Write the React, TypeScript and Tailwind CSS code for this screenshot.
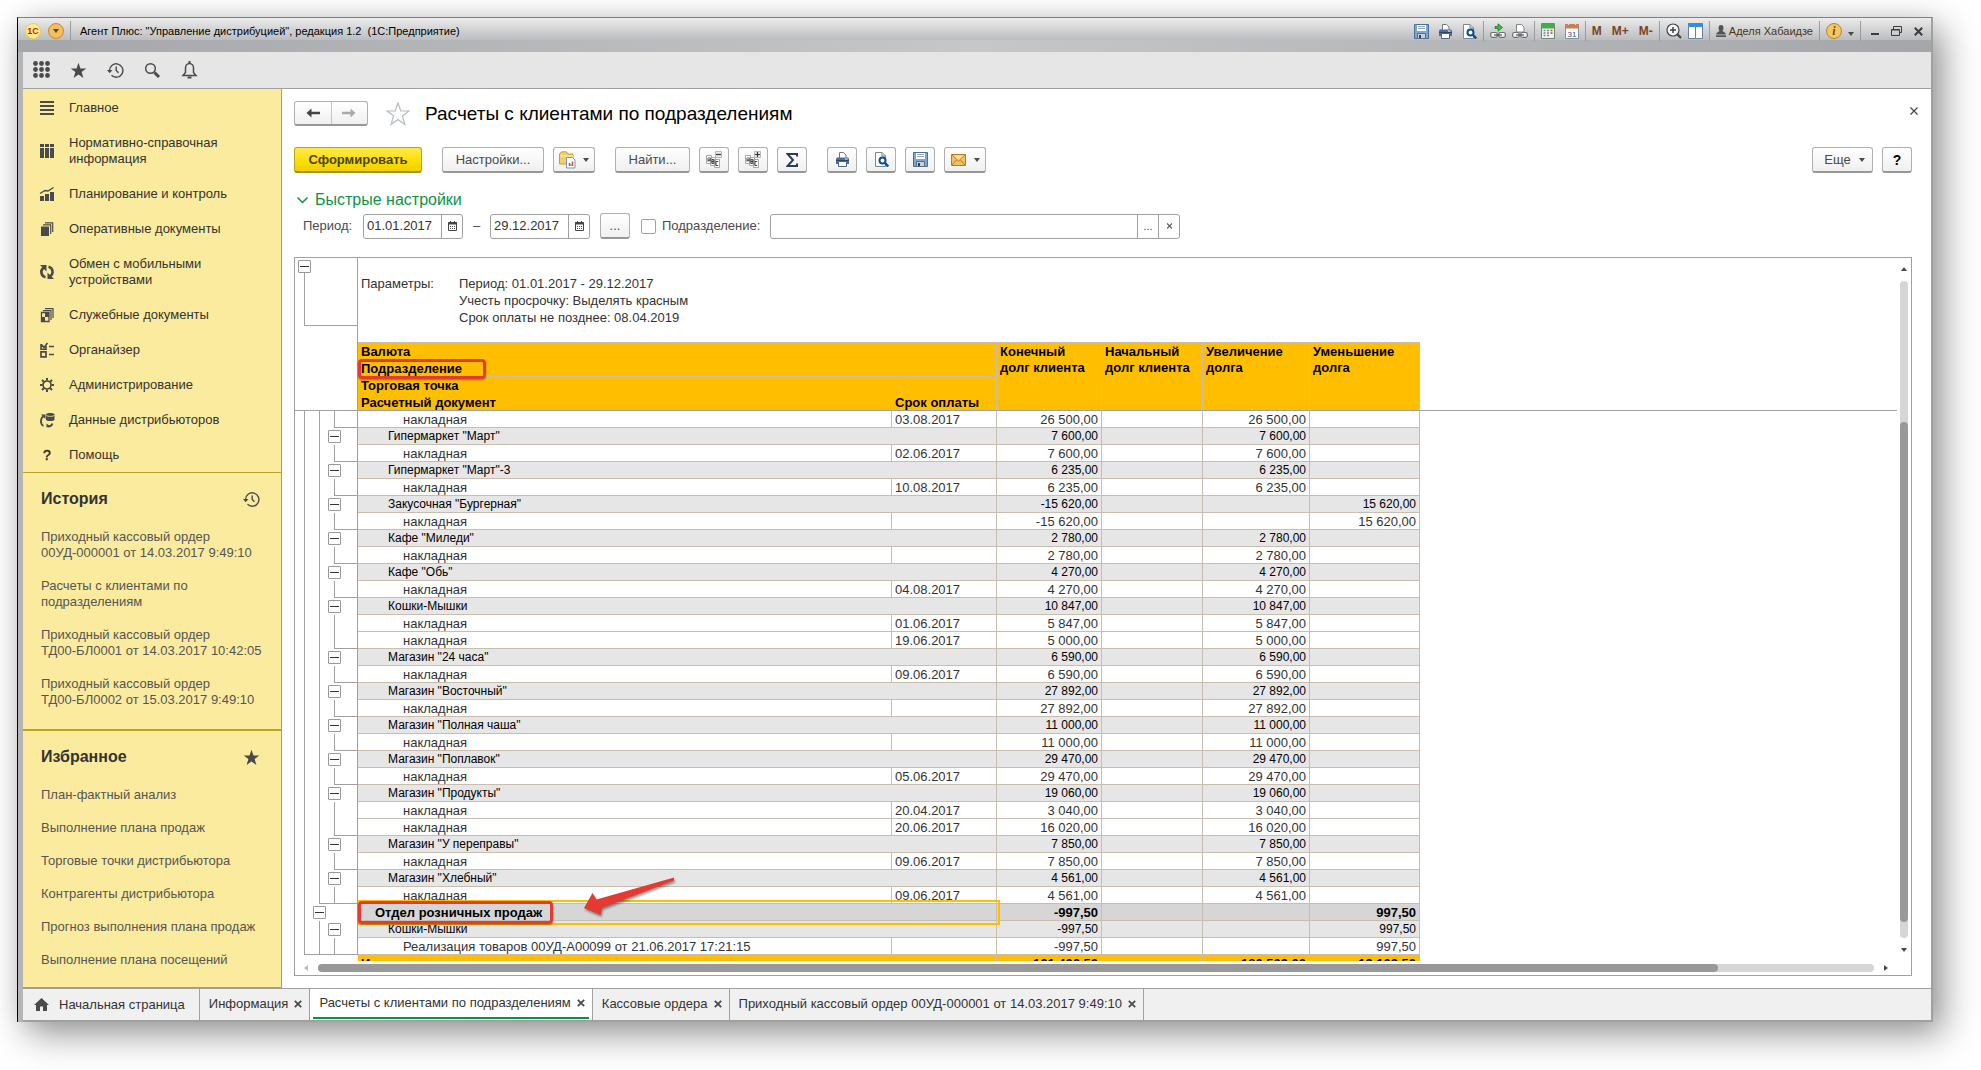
import React from 'react';
import clsx from 'clsx';

type RowKind = 'doc' | 'shop' | 'dept';

interface ReportRow {
  kind: RowKind;
  name: string;
  due?: string;
  end: string;
  plus?: string;
  minus?: string;
}

const doc = (sum: string, due?: string): ReportRow => ({ kind: 'doc', name: 'накладная', due, end: sum, plus: sum });
const shop = (name: string, sum: string): ReportRow => ({ kind: 'shop', name, end: sum, plus: sum });

const rows: ReportRow[] = [
  doc('26 500,00', '03.08.2017'),
  shop('Гипермаркет "Март"', '7 600,00'),
  doc('7 600,00', '02.06.2017'),
  shop('Гипермаркет "Март"-3', '6 235,00'),
  doc('6 235,00', '10.08.2017'),
  { kind: 'shop', name: 'Закусочная "Бургерная"', end: '-15 620,00', minus: '15 620,00' },
  { kind: 'doc', name: 'накладная', end: '-15 620,00', minus: '15 620,00' },
  shop('Кафе "Миледи"', '2 780,00'),
  doc('2 780,00'),
  shop('Кафе "Обь"', '4 270,00'),
  doc('4 270,00', '04.08.2017'),
  shop('Кошки-Мышки', '10 847,00'),
  doc('5 847,00', '01.06.2017'),
  doc('5 000,00', '19.06.2017'),
  shop('Магазин "24 часа"', '6 590,00'),
  doc('6 590,00', '09.06.2017'),
  shop('Магазин "Восточный"', '27 892,00'),
  doc('27 892,00'),
  shop('Магазин "Полная чаша"', '11 000,00'),
  doc('11 000,00'),
  shop('Магазин "Поплавок"', '29 470,00'),
  doc('29 470,00', '05.06.2017'),
  shop('Магазин "Продукты"', '19 060,00'),
  doc('3 040,00', '20.04.2017'),
  doc('16 020,00', '20.06.2017'),
  shop('Магазин "У переправы"', '7 850,00'),
  doc('7 850,00', '09.06.2017'),
  shop('Магазин "Хлебный"', '4 561,00'),
  doc('4 561,00', '09.06.2017'),
  { kind: 'dept', name: 'Отдел розничных продаж', end: '-997,50', minus: '997,50' },
  { kind: 'shop', name: 'Кошки-Мышки', end: '-997,50', minus: '997,50' },
  { kind: 'doc', name: 'Реализация товаров 00УД-А00099 от 21.06.2017 17:21:15', end: '-997,50', minus: '997,50' },
];

/* ---------- icons ---------- */

const StarIcon = ({ size = 17, outline = false }: { size?: number; outline?: boolean }) => (
  <svg width={size} height={size} viewBox="0 0 24 24" className="shrink-0">
    <path
      d="M12 1l2.8 8H23l-6.6 5 2.5 8.500L12 17.500 5.100 22.500 7.600 14 1 9h8.200z"
      fill={outline ? 'none' : '#4a4a4a'}
      stroke={outline ? '#b4bcc4' : 'none'}
      strokeWidth="1.200"
    />
  </svg>
);

const HistoryIcon = () => (
  <svg width="17" height="17" viewBox="0 0 17 17" fill="none" stroke="#4a4a4a" strokeWidth="1.400" className="shrink-0">
    <path d="M2.500 8.500a6.700 6.700 0 1 1 2 4.800" />
    <path d="M9.200 4.500v4l2.300 2.300" />
    <path d="M0 8h5.500L2.700 11.300z" fill="#4a4a4a" stroke="none" />
  </svg>
);

const FloppyIcon = () => (
  <svg width="15" height="15" viewBox="0 0 15 15">
    <path d="M.5.5h14v14H.5z" fill="#7fa6cd" stroke="#47709c" />
    <path d="M3 1h9v6H3z" fill="#fff" />
    <path d="M4 2.500h7M4 4.500h7" stroke="#9ab" />
    <path d="M3.500 9.500h8v5h-8z" fill="#c9d0d6" stroke="#5b6f86" />
    <path d="M5 11h2v3H5z" fill="#345" />
  </svg>
);

const PrinterIcon = () => (
  <svg width="15" height="15" viewBox="0 0 15 15">
    <path d="M4.500 6V.5h4l2.500 2.500v3" fill="#fff" stroke="#6b7785" />
    <path d="M2 5.500h11l1 1V12H1V6.500z" fill="#4a7099" />
    <path d="M1 8.500h13" stroke="#26486d" />
    <path d="M10 7h2.500" stroke="#fff" />
    <path d="M3.500 9.500h8v5h-8z" fill="#fff" stroke="#4a6684" />
  </svg>
);

const PreviewIcon = () => (
  <svg width="15" height="15" viewBox="0 0 15 15" fill="none">
    <path d="M1.500.5h6.500l3.500 3.500v10.500h-10z" fill="#fff" stroke="#7b8794" />
    <path d="M8 .5v3.500h3.500" stroke="#7b8794" />
    <circle cx="8.500" cy="8.500" r="3" stroke="#0d4f86" strokeWidth="2" fill="#fff" />
    <path d="M10.800 10.800l3.400 3.700" stroke="#0d4f86" strokeWidth="2.400" />
  </svg>
);

const ChainIcon = ({ arrow = false }: { arrow?: boolean }) => (
  <svg width="16" height="16" viewBox="0 0 16 16" fill="none">
    {arrow ? (
      <path d="M5 3.500h3V.8l4.500 3.700L8 8.200V5.500H5z" fill="#35c235" stroke="#167016" strokeWidth=".7" />
    ) : (
      <path d="M4.500 9V1.500h5l2.500 2.500v5z" fill="#fff" stroke="#7d8790" />
    )}
    <rect x=".7" y="9.500" width="6.500" height="4.800" rx="1.500" stroke="#6d6f72" strokeWidth="1.200" fill="#f4f4f4" />
    <rect x="8.800" y="9.500" width="6.500" height="4.800" rx="1.500" stroke="#6d6f72" strokeWidth="1.200" fill="#f4f4f4" />
    <path d="M4 12h8" stroke="#555" strokeWidth="1.200" />
  </svg>
);

const CalcIcon = () => (
  <svg width="14" height="16" viewBox="0 0 14 16">
    <path d="M.5.5h13v15H.5z" fill="#f2f4f4" stroke="#6c8a74" />
    <path d="M1 1h12v4.500H1z" fill="#3fb04c" />
    {[7, 9.500, 12].map((y) => (
      <path key={y} d={`M2.500 ${y + 0.5}h2M6 ${y + 0.5}h2`} stroke="#7d7f92" strokeWidth="1.300" />
    ))}
    <path d="M9.500 7.500h2M9.500 10h2" stroke="#d2413a" strokeWidth="1.300" />
  </svg>
);

const Calendar31Icon = () => (
  <svg width="14" height="16" viewBox="0 0 14 16">
    <path d="M.5 1.500h13v14H.5z" fill="#fbfbfd" stroke="#7d8fa3" />
    <path d="M0 1h14v4.500H0z" fill="#c4805a" />
    <path d="M3.500 0v2M10.500 0v2" stroke="#f0d9cc" />
    <text x="7" y="13.500" fontSize="8" textAnchor="middle" fill="#44546a" fontFamily="Liberation Sans">31</text>
  </svg>
);

const ZoomIcon = () => (
  <svg width="16" height="16" viewBox="0 0 16 16" fill="none" stroke="#3f4347">
    <circle cx="7" cy="7" r="6" fill="#f7f7f7" strokeWidth="1.200" />
    <path d="M4 7h6M7 4v6" strokeWidth="1.500" />
    <path d="M11.300 11.300l3.700 3.700" strokeWidth="2.200" />
  </svg>
);

const PanelsIcon = () => (
  <svg width="15" height="16" viewBox="0 0 15 16">
    <path d="M.5 1h14v14.500H.5z" fill="#fff" stroke="#6c8197" />
    <path d="M0 0h15v4H0z" fill="#2f8fe0" />
    <path d="M7.500 4v11.500" stroke="#6c8197" />
  </svg>
);

const CalendarIcon = () => (
  <svg width="9" height="10" viewBox="0 0 9 10" fill="none" stroke="#444">
    <path d="M.5 1.500h8v8h-8z" />
    <path d="M0 2.500h9" strokeWidth="2" />
    <path d="M2.500 0v2M6.500 0v2" />
    <path d="M2 5.500h5M2 7.500h5" strokeDasharray="1 1" />
  </svg>
);

const AbcIcon = ({ sign }: { sign: '-' | '+' }) => (
  <svg width="16" height="17" viewBox="0 0 16 17" fill="none">
    <path d="M.5 4.500h5v8h-5zM4.500 6.500h5v8h-5zM8.500 8.500h5v8h-5z" fill="#fff" stroke="#a4a8ac" />
    <path d="M2 10.500V7.500l1-1 1 1v3M2 9.200h2" stroke="#333" strokeWidth=".9" />
    <path d="M6 8.500v4h1.800v-4zM6 10.500h2" stroke="#333" strokeWidth=".9" />
    <path d="M12.200 10.500H10v4h2.200" stroke="#333" strokeWidth=".9" />
    <path d="M9.500.5h6v6h-6z" fill="#e9e9e9" stroke="#b9b9b9" />
    <path d={sign === '+' ? 'M10 3.500h5M12.500 1v5' : 'M10 3.500h5'} stroke="#333" strokeWidth="1.200" />
  </svg>
);

const FolderReportIcon = () => (
  <svg width="17" height="18" viewBox="0 0 17 18" fill="none">
    <path d="M.5 13V3L2.500.8h5L9 3h5v10z" fill="#f3cf6b" stroke="#d09a30" />
    <path d="M1 5h13" stroke="#fae6a8" strokeWidth="1.500" />
    <path d="M7.500 6.500h6l2.500 2.500v8H7.500z" fill="#fff" stroke="#8295a8" />
    <path d="M10.500 15v-3M13.500 15v-4.500" stroke="#d9512c" strokeWidth="1.500" />
    <path d="M12 15v-2" stroke="#4a7ab5" />
  </svg>
);

const MailIcon = () => (
  <svg width="15" height="12" viewBox="0 0 15 12" fill="none">
    <path d="M.5.5h14v11H.5z" fill="#f2bf62" stroke="#bb7a1e" />
    <path d="M1 1l6.500 6L14 1M1 11l4.500-5M14 11L9.500 6" stroke="#bb7a1e" />
    <path d="M2 1.500h11L7.500 6z" fill="#fbe0a6" />
  </svg>
);

const Caret = () => <span className="inline-block border-x-[3px] border-t-4 border-x-transparent border-t-[#4a4a4a]" />;

const MenuIcon = ({ name }: { name: string }) => {
  const g = '#4a4a4a';
  switch (name) {
    case 'main':
      return <path d="M0 1h14M0 5h14M0 9h14M0 13h14" stroke={g} strokeWidth="2" />;
    case 'ref':
      return <path d="M0 0h4v3H0zM5 0h4v3H5zM10 0h4v3h-4zM0 4h4v10H0zM5 4h4v10H5zM10 4h4v10h-4z" fill={g} />;
    case 'plan':
      return (
        <>
          <path d="M0 9h4v5H0zM5 7h4v7H5zM10 5h4v9h-4z" fill={g} />
          <path d="M0 6.500L5 3.500l3 .5L13.500.5" stroke={g} strokeWidth="1.300" fill="none" />
        </>
      );
    case 'docs':
      return (
        <>
          <path d="M1 4.500h8V14H1z" fill={g} />
          <path d="M3 2.800h7.700V12M5 .8h7.700V10" stroke={g} strokeWidth="1.200" fill="none" />
        </>
      );
    case 'sync':
      return (
        <>
          <path d="M5.500 2.500C2.500 3 1 5 1.500 8c.4 2.300 2 3.800 4 4.200M8.500 12c3-1 4.500-3 4-6-.4-2.300-2-3.800-4-4.200" stroke={g} strokeWidth="2.600" fill="none" />
          <path d="M0 0h6.500v6.500zM14 14H7.500V7.500z" fill={g} />
        </>
      );
    case 'service':
      return (
        <>
          <path d="M1.500 4.500H9v9H1.500z" stroke={g} strokeWidth="1.300" fill="none" />
          <path d="M5 4.500h4V9H5zM2 9h3v4.500H2z" fill={g} />
          <path d="M3 2.600h8V12M5 .7h8V10" stroke={g} strokeWidth="1.200" fill="none" />
        </>
      );
    case 'organizer':
      return (
        <>
          <path d="M1 8.800h5v5H1z" stroke={g} strokeWidth="1.700" fill="none" />
          <path d="M6 3v3.200H1V1M1.500 1.500l2.500 3L7.500 0M9 3.500h5M9 11.500h5" stroke={g} strokeWidth="1.600" fill="none" />
        </>
      );
    case 'admin':
      return (
        <>
          <circle cx="7" cy="7" r="4" stroke={g} strokeWidth="1.700" fill="none" />
          <path d="M7 0v2.500M7 11.500V14M0 7h2.500M11.500 7H14M2 2l1.800 1.800M10.200 10.200L12 12M12 2l-1.800 1.800M3.800 10.200L2 12" stroke={g} strokeWidth="2" />
        </>
      );
    case 'data':
      return (
        <>
          <path d="M6 1.500c0-2 8.500-2 8.500 0v5c0 2-8.500 2-8.500 0z" fill={g} />
          <path d="M6 2.500c2 1.200 6.500 1.200 8.500 0" stroke="#fbeb9e" strokeWidth=".8" fill="none" />
          <path d="M4 3C0 5 0 11 3.500 13M8 13.500c2.500 0 4-1.500 4.300-3" stroke={g} strokeWidth="1.800" fill="none" />
          <path d="M1 1.500h4.500V6zM6.500 10.500v4l4-1z" fill={g} />
        </>
      );
    default:
      return <text x="7" y="12" fontSize="14" textAnchor="middle" fill="#222" stroke="#222" strokeWidth=".4">?</text>;
  }
};

/* ---------- window chrome ---------- */

const Sep = () => <span className="h-5 w-px bg-[#9b9ca0]" />;

const TitleButton = ({ label, children }: { label: string; children: React.ReactNode }) => (
  <button type="button" aria-label={label} className="flex items-center justify-center">
    {children}
  </button>
);

const TitleBar = () => (
  <header className="bg-linear-to-r from-[#a5a6a9] via-[#c6c7c9] to-[#a5a6a9] pb-3">
    <div className="flex h-[22px] items-center bg-linear-to-b from-[#ececec] to-[#bcbdc0] pt-1 pr-2 pl-[7px]">
      <span className="flex size-4 items-center justify-center rounded-full border border-[#e8cf58] bg-[#fff08c] text-[9px] leading-none font-bold text-[#d4121a]">1С</span>
      <button type="button" aria-label="Главное меню" className="ml-[7px] flex size-4 items-center justify-center rounded-full border border-[#c98b2c] bg-[#f7bf5c]">
        <Caret />
      </button>
      <span className="ml-1.5 h-5 w-px bg-[#9b9ca0]" />
      <span className="ml-[9px] text-[11px] leading-4 whitespace-pre text-black">
        Агент Плюс: "Управление дистрибуцией", редакция 1.2  (1С:Предприятие)
      </span>
      <div className="ml-auto flex items-center gap-1.5">
        <div className="flex items-center gap-[9px]">
          <TitleButton label="Сохранить"><FloppyIcon /></TitleButton>
          <TitleButton label="Печать"><PrinterIcon /></TitleButton>
          <TitleButton label="Предварительный просмотр"><PreviewIcon /></TitleButton>
        </div>
        <Sep />
        <TitleButton label="Получить ссылку"><ChainIcon arrow /></TitleButton>
        <TitleButton label="Перейти по ссылке"><ChainIcon /></TitleButton>
        <Sep />
        <div className="flex items-center gap-2.5">
          <TitleButton label="Калькулятор"><CalcIcon /></TitleButton>
          <TitleButton label="Календарь"><Calendar31Icon /></TitleButton>
        </div>
        <Sep />
        <div className="flex w-[61px] items-center justify-between text-[12px] leading-4 font-bold text-[#7a4522]">
          <button type="button">M</button>
          <button type="button">M+</button>
          <button type="button">M-</button>
        </div>
        <Sep />
        <TitleButton label="Масштаб"><ZoomIcon /></TitleButton>
        <TitleButton label="Панели"><PanelsIcon /></TitleButton>
        <Sep />
        <span className="flex items-center gap-[3px] text-[11px] leading-4 text-[#4a3410]">
          <svg width="10" height="12" viewBox="0 0 10 12" fill="#555">
            <path d="M2.500 3a2.500 3 0 0 1 5 0c0 2-1 3-1 3L9.500 8v1.500H.5V8l3-2s-1-1-1-3z" />
            <path d="M0 10.300h10V12H0z" />
          </svg>
          Аделя Хабаидзе
        </span>
        <Sep />
        <TitleButton label="О программе">
          <span className="flex size-4 items-center justify-center rounded-full border border-[#b8862c] bg-[#f6c663] font-['Liberation_Serif',serif] text-[12px] leading-none font-bold text-[#7a4a10] italic">i</span>
        </TitleButton>
        <span className="pt-1.5"><TitleButton label="Ещё"><Caret /></TitleButton></span>
        <Sep />
        <div className="flex items-center gap-3 pl-1">
          <TitleButton label="Свернуть"><span className="mt-1.5 h-0.5 w-2 bg-[#3c3c3c]" /></TitleButton>
          <TitleButton label="Восстановить">
            <svg width="11" height="10" viewBox="0 0 11 10" fill="none" stroke="#3c3c3c">
              <path d="M2.500 3V.5h8v6H8" />
              <path d="M.5 3.500h8v6h-8zM0 4h9" />
            </svg>
          </TitleButton>
          <TitleButton label="Закрыть">
            <svg width="9" height="9" viewBox="0 0 9 9" stroke="#3c3c3c" strokeWidth="2">
              <path d="M.8.8l7.400 7.400M8.200.8L.8 8.200" />
            </svg>
          </TitleButton>
        </div>
      </div>
    </div>
  </header>
);

const TopBar = () => (
  <nav className="flex h-[37px] shrink-0 items-center gap-5 border-b border-[#a0a0a0] bg-[#e6e6e6] pl-2.5">
    <button type="button" aria-label="Меню функций">
      <svg width="17" height="18" viewBox="0 0 17 18" fill="#4a4a4a">
        {[2.5, 8.500, 14.500].map((y) => [2.5, 8.500, 14.500].map((x) => <circle key={`${x}-${y}`} cx={x} cy={y} r="2.400" />))}
      </svg>
    </button>
    <button type="button" aria-label="Избранное"><StarIcon /></button>
    <button type="button" aria-label="История"><HistoryIcon /></button>
    <button type="button" aria-label="Поиск">
      <svg width="17" height="17" viewBox="0 0 17 17" fill="none" stroke="#4a4a4a">
        <circle cx="6.500" cy="6.500" r="4.800" strokeWidth="1.500" />
        <path d="M10.500 10.500l4.500 4.500" strokeWidth="3" />
      </svg>
    </button>
    <button type="button" aria-label="Оповещения">
      <svg width="17" height="18" viewBox="0 0 17 18" fill="none" stroke="#4a4a4a" strokeWidth="1.500">
        <path d="M2 14.500l2.500-3V7a4 4.500 0 0 1 8 0v4.500l2.500 3z" />
        <path d="M8.500 0v3M6.500 16.500h4" strokeWidth="2" />
      </svg>
    </button>
  </nav>
);

/* ---------- sidebar ---------- */

const menu = [
  { icon: 'main', label: 'Главное' },
  { icon: 'ref', label: 'Нормативно-справочная информация' },
  { icon: 'plan', label: 'Планирование и контроль' },
  { icon: 'docs', label: 'Оперативные документы' },
  { icon: 'sync', label: 'Обмен с мобильными устройствами' },
  { icon: 'service', label: 'Служебные документы' },
  { icon: 'organizer', label: 'Органайзер' },
  { icon: 'admin', label: 'Администрирование' },
  { icon: 'data', label: 'Данные дистрибьюторов' },
  { icon: 'help', label: 'Помощь' },
];

const history = [
  ['Приходный кассовый ордер', '00УД-000001 от 14.03.2017 9:49:10'],
  ['Расчеты с клиентами по', 'подразделениям'],
  ['Приходный кассовый ордер', 'ТД00-БЛ0001 от 14.03.2017 10:42:05'],
  ['Приходный кассовый ордер', 'ТД00-БЛ0002 от 15.03.2017 9:49:10'],
];

const favorites = [
  'План-фактный анализ',
  'Выполнение плана продаж',
  'Торговые точки дистрибьютора',
  'Контрагенты дистрибьютора',
  'Прогноз выполнения плана продаж',
  'Выполнение плана посещений',
];

const Sidebar = () => (
  <aside className="w-[259px] shrink-0 overflow-hidden border-r border-b border-[#b9a41f] bg-[#fbeb9e] text-[13px] leading-4">
    <ul className="flex flex-col gap-[19px] pt-[11px] pb-[9px] pl-[17px] text-[#333]">
      {menu.map((item) => (
        <li key={item.icon}>
          <a href="#" className="flex items-center gap-[15px]">
            <svg width="14" height="14" viewBox="0 0 14 14" className="shrink-0 overflow-visible">
              <MenuIcon name={item.icon} />
            </svg>
            <span className="w-[160px]">{item.label}</span>
          </a>
        </li>
      ))}
    </ul>
    <section className="border-t border-[#b9a41f] pt-4 pr-[21px] pb-[21px] pl-[18px]">
      <div className="mb-5 flex items-center justify-between">
        <h2 className="text-[16px] leading-5 font-bold text-[#333]">История</h2>
        <HistoryIcon />
      </div>
      <ul className="flex flex-col gap-[17px] text-[#555]">
        {history.map(([first, second]) => (
          <li key={second}>
            <a href="#" className="block whitespace-nowrap">{first}<br />{second}</a>
          </li>
        ))}
      </ul>
    </section>
    <section className="border-t-2 border-[#b9a41f] pt-4 pr-[21px] pl-[18px]">
      <div className="mb-5 flex items-center justify-between">
        <h2 className="text-[16px] leading-5 font-bold text-[#333]">Избранное</h2>
        <StarIcon />
      </div>
      <ul className="flex flex-col gap-[17px] text-[#555]">
        {favorites.map((label) => (
          <li key={label}><a href="#" className="block whitespace-nowrap">{label}</a></li>
        ))}
      </ul>
    </section>
  </aside>
);

/* ---------- form ---------- */

interface ButtonProps {
  children: React.ReactNode;
  label?: string;
  className?: string;
}

const Button: React.FC<ButtonProps> = ({ children, label, className }) => (
  <button
    type="button"
    aria-label={label}
    className={clsx(
      'flex h-[26px] items-center justify-center rounded-[3px] border border-b-2 border-[#b0b0b0] border-b-[#979797] bg-linear-to-b from-white to-[#f0f0f0] text-[13px] leading-4 text-[#4a4a4a]',
      className,
    )}
  >
    {children}
  </button>
);

const CommandBar = () => (
  <div className="flex items-center gap-5">
    <button
      type="button"
      className="h-[26px] w-32 rounded-[3px] border border-b-2 border-[#b9a41f] border-b-[#a08f16] bg-linear-to-b from-[#ffe945] via-[#ffe100] to-[#f0cf00] text-[13px] leading-4 font-bold text-[#4a4215]"
    >
      Сформировать
    </button>
    <div className="flex gap-[9px]">
      <Button className="w-[102px]">Настройки...</Button>
      <Button label="Варианты отчета" className="w-[42px] gap-[7px]"><FolderReportIcon /><Caret /></Button>
    </div>
    <div className="flex gap-[9px]">
      <Button className="w-[75px]">Найти...</Button>
      <Button label="Свернуть группы" className="w-[30px]"><AbcIcon sign="-" /></Button>
      <Button label="Развернуть группы" className="w-[30px]"><AbcIcon sign="+" /></Button>
      <Button label="Сумма" className="w-[30px]">
        <svg width="12" height="14" viewBox="0 0 12 14" fill="none" stroke="#2c3e50" strokeWidth="2">
          <path d="M11 3.500V1H1.500L7 7l-5.500 6H11v-2.500" />
        </svg>
      </Button>
    </div>
    <div className="flex gap-[9px]">
      <Button label="Печать" className="w-[30px]"><PrinterIcon /></Button>
      <Button label="Предварительный просмотр" className="w-[30px]"><PreviewIcon /></Button>
      <Button label="Сохранить" className="w-[30px]"><FloppyIcon /></Button>
      <Button label="Отправить по почте" className="w-[42px] gap-2"><MailIcon /><Caret /></Button>
    </div>
    <div className="ml-auto flex gap-[9px]">
      <Button className="w-[61px] gap-2 pl-1">Еще <Caret /></Button>
      <Button label="Справка" className="w-[30px]"><span className="text-[14px] font-bold text-black">?</span></Button>
    </div>
  </div>
);

const DateField = ({ label, value }: { label: string; value: string }) => (
  <span className="flex h-[25px] w-[100px] rounded-[3px] border border-[#a0a0a0]">
    <input type="text" aria-label={label} defaultValue={value} className="min-w-0 flex-1 pl-[3px] text-[13px] leading-4 text-[#333] outline-none" />
    <button type="button" aria-label="Выбрать дату" className="flex w-[21px] items-center justify-center border-l border-[#a0a0a0]">
      <CalendarIcon />
    </button>
  </span>
);

const QuickSettings = () => (
  <section>
    <h2>
      <button type="button" className="ml-[3px] flex items-center gap-[7px] text-[16px] leading-5 text-[#0b9446]">
        <svg width="11" height="7" viewBox="0 0 11 7" fill="none" stroke="#0b9446" strokeWidth="1.500">
          <path d="M.5.5l5 5 5-5" />
        </svg>
        Быстрые настройки
      </button>
    </h2>
    <div className="mt-[3px] flex items-center pl-[9px] text-[13px] leading-4 text-[#4a4a4a]">
      <span className="w-[60px]">Период:</span>
      <DateField label="Начало периода" value="01.01.2017" />
      <span className="w-[27px] text-center">–</span>
      <DateField label="Конец периода" value="29.12.2017" />
      <Button label="Выбрать период" className="ml-2.5 w-[30px]">...</Button>
      <input id="use-dept" type="checkbox" className="ml-[11px] size-[15px] appearance-none rounded-[2px] border border-[#a0a0a0] bg-white" />
      <label htmlFor="use-dept" className="ml-[6px] w-[108px]">Подразделение:</label>
      <span className="flex h-[25px] w-[410px] rounded-[3px] border border-[#a0a0a0]">
        <input type="text" aria-label="Подразделение" className="min-w-0 flex-1 px-1 outline-none" />
        <button type="button" aria-label="Выбрать" className="w-[21px] border-l border-[#a0a0a0] text-[11px]">...</button>
        <button type="button" aria-label="Очистить" className="flex w-[21px] items-center justify-center border-l border-[#a0a0a0]">
          <svg width="5" height="6" viewBox="0 0 5 6" stroke="#555" strokeWidth="1.200"><path d="M0 .5l5 5M5 .5l-5 5" /></svg>
        </button>
      </span>
    </div>
  </section>
);

/* ---------- report ---------- */

const Collapse = () => (
  <button type="button" aria-label="Свернуть группу" className="flex size-[13px] items-center justify-center rounded-[1px] border border-[#999] bg-white">
    <span className="h-px w-[9px] bg-[#333]" />
  </button>
);

const line = 'border-[#a0a0a0]';

// Tree lines to the left of one row: three levels, each 15px to the right of the previous one
const Gutter = ({ index }: { index: number }) => {
  const { kind } = rows[index];
  const next = rows[index + 1]?.kind;
  const closesShop = next !== 'doc' && kind === 'doc';
  const closesDept = closesShop && next !== 'shop';
  const closesAll = index === rows.length - 1;
  return (
    <div className="flex h-[17px] pl-[9px]">
      <span className={clsx('w-[15px] border-l', line, closesAll && 'border-b')} />
      <span className={clsx('relative w-[15px]', line, kind !== 'dept' && 'border-l', closesDept && 'border-b')}>
        {kind === 'dept' && <span className="absolute top-[2px] -left-[6px]"><Collapse /></span>}
      </span>
      <span className={clsx('relative flex-1', line, kind === 'doc' && 'border-l', closesShop && 'border-b')}>
        {kind === 'shop' && <span className="absolute top-[2px] -left-[6px]"><Collapse /></span>}
      </span>
    </div>
  );
};

const rowStyle: Record<RowKind, string> = {
  doc: 'bg-white text-[13px] text-[#333]',
  shop: 'bg-[#e6e6e6] text-[12px] text-black',
  dept: 'bg-[#d6d6d6] text-[13px] font-bold text-black',
};

const indent: Record<RowKind, string> = { doc: 'pl-[45px]', shop: 'pl-[30px]', dept: 'pl-[17px]' };

const cell = 'h-[17px] border-r border-b border-[#c9beae] pb-0 pt-px leading-[15px] whitespace-nowrap';

const Marker = ({ className }: { className: string }) => (
  <span className={clsx('pointer-events-none absolute z-10 rounded-[4px] border-[3px] border-[#e53a32] shadow-[0_1px_2px_rgba(0,0,0,0.4)]', className)} />
);

const Arrow = () => (
  <svg width="96" height="44" viewBox="0 0 96 44" className="pointer-events-none absolute -top-[28px] left-[224px] z-10 drop-shadow-[1px_2px_1px_rgba(0,0,0,0.4)]">
    <path d="M2 32L10.500 17l4 6.500L92 1.500v3L20 32l-1.500 7z" fill="#e53a32" />
  </svg>
);

const ReportTable = () => (
  <table className="w-full table-fixed border-separate border-spacing-0 leading-4">
    <colgroup>
      <col className="w-[63px]" />
      <col className="w-[534px]" />
      <col className="w-[105px]" />
      <col className="w-[105px]" />
      <col className="w-[101px]" />
      <col className="w-[107px]" />
      <col className="w-[110px]" />
      <col />
    </colgroup>
    <thead className="text-left text-[13px] text-black">
      <tr>
        <td rowSpan={4} className="border-r border-b border-[#a0a0a0]" />
        <th colSpan={2} className={clsx(cell, 'h-[18px] border-t bg-[#ffbf00] pl-[3px]')}>Валюта</th>
        {['Конечный долг клиента', 'Начальный долг клиента', 'Увеличение долга', 'Уменьшение долга'].map((title) => (
          <th key={title} rowSpan={4} className="border-t border-r border-b border-[#c9beae] border-b-[#a0a0a0] bg-[#ffbf00] pt-px pb-0 pl-[3px] align-top">
            {title.split(' ')[0]}<br />{title.split(' ').slice(1).join(' ')}
          </th>
        ))}
        <td rowSpan={4} className="border-b border-[#a0a0a0]" />
      </tr>
      <tr>
        <th colSpan={2} className={clsx(cell, 'relative bg-[#ffbf00] pl-[3px]')}>
          Подразделение
          <Marker className="-top-px left-0 h-5 w-32" />
        </th>
      </tr>
      <tr><th colSpan={2} className={clsx(cell, 'bg-[#ffbf00] pl-[3px]')}>Торговая точка</th></tr>
      <tr>
        <th className={clsx(cell, 'border-b-[#a0a0a0] bg-[#ffbf00] pl-[3px]')}>Расчетный документ</th>
        <th className={clsx(cell, 'border-b-[#a0a0a0] bg-[#ffbf00] pl-[3px]')}>Срок оплаты</th>
      </tr>
    </thead>
    <tbody>
      {rows.map((row, i) => (
        <tr key={i} className={rowStyle[row.kind]}>
          <td className="border-r border-[#a0a0a0] bg-white p-0"><Gutter index={i} /></td>
          <td colSpan={row.kind === 'doc' ? 1 : 2} className={clsx(cell, indent[row.kind], row.kind === 'dept' && 'relative')}>
            {row.name}
            {row.kind === 'dept' && (
              <>
                <span className="pointer-events-none absolute -top-[4px] -right-[4px] left-0 h-[25px] border-2 border-[#ffbf00]" />
                <Marker className="-top-[3px] left-0 h-[23px] w-[195px]" />
                <Arrow />
              </>
            )}
          </td>
          {row.kind === 'doc' && <td className={clsx(cell, 'pl-[3px]')}>{row.due}</td>}
          <td className={clsx(cell, 'pr-[3px] text-right')}>{row.end}</td>
          <td className={cell} />
          <td className={clsx(cell, 'pr-[3px] text-right')}>{row.plus}</td>
          <td className={clsx(cell, 'pr-[3px] text-right')}>{row.minus}</td>
          <td className="bg-white p-0" />
        </tr>
      ))}
      <tr className="bg-[#ffbf00] text-[13px] font-bold text-black">
        <td className="bg-white p-0" />
        <td colSpan={2} className={clsx(cell, 'pl-[3px]')}>Итого</td>
        <td className={clsx(cell, 'pr-[3px] text-right')}>161 406,50</td>
        <td className={cell} />
        <td className={clsx(cell, 'pr-[3px] text-right')}>180 509,00</td>
        <td className={clsx(cell, 'pr-[3px] text-right')}>19 102,50</td>
        <td className="bg-white p-0" />
      </tr>
    </tbody>
  </table>
);

const Report = () => (
  <section className="flex min-h-0 flex-1 flex-col border border-[#a0a0a0] bg-white">
    <div className="flex min-h-0 flex-1">
      <div className="min-w-0 flex-1 overflow-hidden">
        <div className="flex h-[84px] text-[13px] leading-[17px] text-[#333]">
          <div className="flex w-[63px] flex-col border-r border-[#a0a0a0] pt-[2px] pl-[3px]">
            <Collapse />
            <span className="ml-[6px] h-[53px] border-b border-l border-[#a0a0a0]" />
          </div>
          <span className="w-[101px] pt-[17px] pl-[3px]">Параметры:</span>
          <p className="pt-[17px]">
            Период: 01.01.2017 - 29.12.2017<br />
            Учесть просрочку: Выделять красным<br />
            Срок оплаты не позднее: 08.04.2019
          </p>
        </div>
        <ReportTable />
      </div>
      <div className="flex w-[14px] flex-col items-center pt-[9px] pb-[9px]">
        <span className="border-x-[3px] border-b-4 border-x-transparent border-b-[#4a4a4a]" />
        <div className="mt-[10px] mb-[10px] flex w-2 flex-1 flex-col rounded-full bg-[#d6d6d6] pt-[141px] pb-4">
          <span className="flex-1 rounded-full bg-[#999]" />
        </div>
        <Caret />
      </div>
    </div>
    <div className="flex h-[14px] items-center pr-[23px] pl-[9px]">
      <span className="border-y-[3px] border-r-4 border-y-transparent border-r-[#bbb]" />
      <div className="mr-[10px] ml-[10px] h-2 flex-1 rounded-full bg-[#d6d6d6]">
        <span className="block h-2 w-[90%] rounded-full bg-[#999]" />
      </div>
      <span className="border-y-[3px] border-l-4 border-y-transparent border-l-[#4a4a4a]" />
    </div>
  </section>
);

const Workspace = () => (
  <main className="flex min-w-0 flex-1 flex-col bg-white pt-3 pr-[19px] pb-3 pl-3">
    <div className="flex h-[25px] items-center">
      <div className="flex h-[25px] w-[74px] rounded-[3px] border border-b-2 border-[#b0b0b0] border-b-[#979797] bg-linear-to-b from-white to-[#f0f0f0]">
        <button type="button" aria-label="Назад" className="flex flex-1 items-center justify-center border-r border-[#c4c4c4]">
          <svg width="14" height="10" viewBox="0 0 14 10" stroke="#444" fill="#444"><path d="M4 5h10" strokeWidth="2.500" /><path d="M5.500.5v9L.5 5z" stroke="none" /></svg>
        </button>
        <button type="button" aria-label="Вперед" className="flex flex-1 items-center justify-center">
          <svg width="14" height="10" viewBox="0 0 14 10" stroke="#aaa" fill="#aaa"><path d="M0 5h10" strokeWidth="2.500" /><path d="M8.500.5v9l5-4.500z" stroke="none" /></svg>
        </button>
      </div>
      <button type="button" aria-label="В избранное" className="ml-[18px]"><StarIcon size={24} outline /></button>
      <h1 className="ml-[15px] text-[19px] leading-6 text-black">Расчеты с клиентами по подразделениям</h1>
      <button type="button" aria-label="Закрыть форму" className="-mr-1.5 mb-1.5 ml-auto">
        <svg width="8" height="8" viewBox="0 0 8 8" stroke="#444" strokeWidth="1.200"><path d="M.5.5l7 7M7.500.5l-7 7" /></svg>
      </button>
    </div>
    <div className="mt-[21px]"><CommandBar /></div>
    <div className="mt-[17px] mb-[18px]"><QuickSettings /></div>
    <Report />
  </main>
);

/* ---------- bottom tabs ---------- */

const tabs = [
  { label: 'Информация' },
  { label: 'Расчеты с клиентами по подразделениям', active: true },
  { label: 'Кассовые ордера' },
  { label: 'Приходный кассовый ордер 00УД-000001 от 14.03.2017 9:49:10' },
];

const TabBar = () => (
  <nav className="flex h-[34px] shrink-0 border-t border-b-2 border-[#a0a0a0] bg-[#f0f0f0] text-[13px] leading-4 text-[#333]">
    <button type="button" className="flex items-center gap-2.5 border-r border-[#a0a0a0] pr-3.5 pl-[11px]">
      <svg width="15" height="13" viewBox="0 0 15 13" fill="#4a4a4a"><path d="M7.500 0L15 7h-2v6H9V8.500H6V13H2V7H0z" /></svg>
      Начальная страница
    </button>
    {tabs.map((tab) => (
      <div key={tab.label} className={clsx('flex border-r border-[#a0a0a0] px-[3px]', tab.active && 'bg-white')}>
        <div className={clsx('flex items-center gap-1.5 border-b-2 pr-1 pl-1.5', tab.active ? 'mb-px border-[#009646]' : 'border-transparent')}>
          <button type="button" className="whitespace-nowrap">{tab.label}</button>
          <button type="button" aria-label="Закрыть вкладку">
            <svg width="8" height="8" viewBox="0 0 8 8" stroke="#4a4a4a" strokeWidth="1.800"><path d="M.8.8l6.400 6.400M7.200.8L.8 7.200" /></svg>
          </button>
        </div>
      </div>
    ))}
  </nav>
);

const App = () => (
  <div className="flex h-screen bg-white pt-[17px] pr-12 pb-12 pl-[17px] font-['Liberation_Sans',Arial,sans-serif]">
    <div className="flex min-w-0 flex-1 flex-col border-t border-r-2 border-l border-t-[#808080] border-r-[#a0a0a0] border-l-black bg-[#b4b5b7] shadow-[10px_12px_34px_rgba(0,0,0,0.42),0_0_20px_rgba(0,0,0,0.06)]">
      <TitleBar />
      <div className="ml-[5px] flex min-h-0 flex-1 flex-col">
        <TopBar />
        <div className="flex min-h-0 flex-1">
          <Sidebar />
          <Workspace />
        </div>
        <TabBar />
      </div>
    </div>
  </div>
);

export default App;
